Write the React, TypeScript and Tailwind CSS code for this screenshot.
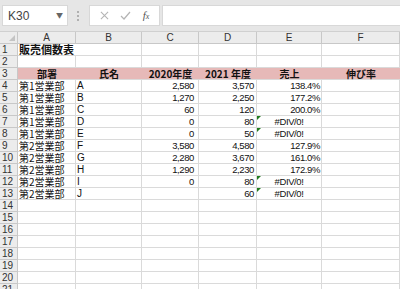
import React from "react";

type Row = { a?: string; b?: string; c?: string; d?: string; e?: string; err?: boolean };

const data: Row[] = [
  { a: "第1営業部", b: "A", c: "2,580", d: "3,570", e: "138.4%" },
  { a: "第1営業部", b: "B", c: "1,270", d: "2,250", e: "177.2%" },
  { a: "第1営業部", b: "C", c: "60", d: "120", e: "200.0%" },
  { a: "第1営業部", b: "D", c: "0", d: "80", e: "#DIV/0!", err: true },
  { a: "第1営業部", b: "E", c: "0", d: "50", e: "#DIV/0!", err: true },
  { a: "第2営業部", b: "F", c: "3,580", d: "4,580", e: "127.9%" },
  { a: "第2営業部", b: "G", c: "2,280", d: "3,670", e: "161.0%" },
  { a: "第2営業部", b: "H", c: "1,290", d: "2,230", e: "172.9%" },
  { a: "第2営業部", b: "I", c: "0", d: "80", e: "#DIV/0!", err: true },
  { a: "第2営業部", b: "J", c: "", d: "60", e: "#DIV/0!", err: true },
];

const LS = { fontFamily: '"Liberation Sans", Arial, sans-serif' };
const cell = "h-[12px] border-r border-b border-[#dadada] overflow-visible whitespace-nowrap leading-[11px] text-[10px] text-[#111]";
const num = "h-[12px] border-r border-b border-[#dadada] whitespace-nowrap leading-[11px] text-[9.5px] tracking-[-0.4px] text-[#111]";
const rh = "h-[12px] border-r border-b border-[#c8c8c8] bg-[#ececec] text-[10px] leading-[11px] pl-[2px] text-[#333]";

export default function App() {
  const rows: React.ReactNode[] = [];
  rows.push(
    <React.Fragment key="r1">
      <div className={rh} style={LS}>1</div>
      <div className={`${cell} pl-[1px] font-bold text-[11px] relative z-10 border-r-0`}>販売個数表</div>
      <div className={cell}></div>
      <div className={cell}></div>
      <div className={cell}></div>
      <div className={cell}></div>
      <div className={cell}></div>
    </React.Fragment>
  );
  rows.push(
    <React.Fragment key="r2">
      <div className={rh} style={LS}>2</div>
      {[0, 1, 2, 3, 4, 5].map((i) => (
        <div key={i} className={cell}></div>
      ))}
    </React.Fragment>
  );
  const hdrs = ["部署", "氏名", "2020年度", "2021 年度", "売上", "伸び率"];
  rows.push(
    <React.Fragment key="r3">
      <div className={rh} style={LS}>3</div>
      {hdrs.map((h, i) => (
        <div key={i} className="h-[12px] border-b border-[#dadada] bg-[#e6b9b8] text-center font-bold text-[10px] leading-[11px] text-[#111] whitespace-nowrap">
          {h}
        </div>
      ))}
    </React.Fragment>
  );
  data.forEach((r, idx) => {
    rows.push(
      <React.Fragment key={"d" + idx}>
        <div className={rh} style={LS}>{idx + 4}</div>
        <div className={`${cell} pl-[1px]`}>{r.a}</div>
        <div className={`${cell} pl-[1px]`} style={LS}>{r.b}</div>
        <div className={`${num} text-right pr-[4px]`} style={LS}>{r.c}</div>
        <div className={`${num} text-right pr-[2px]`} style={LS}>{r.d}</div>
        <div className={`${num} relative ${r.err ? "text-center" : "text-right pr-[1px]"}`} style={LS}>
          {r.err && (
            <span className="absolute left-0 top-0 w-0 h-0 border-t-[4px] border-r-[4px] border-t-[#1e7b1e] border-r-transparent"></span>
          )}
          {r.e}
        </div>
        <div className={cell}></div>
      </React.Fragment>
    );
  });
  for (let n = 14; n <= 21; n++) {
    rows.push(
      <React.Fragment key={"e" + n}>
        <div className={rh} style={LS}>{n}</div>
        {[0, 1, 2, 3, 4, 5].map((i) => (
          <div key={i} className={cell}></div>
        ))}
      </React.Fragment>
    );
  }

  return (
    <div className="w-[400px] h-[289px] overflow-hidden bg-white" style={{ fontFamily: '"Noto Sans CJK JP", "Liberation Sans", sans-serif' }}>
      <div className="h-[32px] bg-[#e6e6e6] flex items-center border-b border-[#d0d0d0]">
        <div className="ml-[2px] w-[66px] h-[21px] bg-white border border-[#d8d8d8] flex items-center pl-[5px] pr-[4px] text-[12px] text-[#444]">
          <span className="flex-1" style={LS}>K30</span>
          <span className="text-[7px] text-[#666]">▼</span>
        </div>
        <div className="w-[20px] flex flex-col items-center gap-[2px]">
          <span className="w-[2px] h-[2px] bg-[#b0b0b0]"></span>
          <span className="w-[2px] h-[2px] bg-[#b0b0b0]"></span>
          <span className="w-[2px] h-[2px] bg-[#b0b0b0]"></span>
        </div>
        <div className="ml-[1px] w-[71px] h-[21px] bg-white border border-[#d8d8d8] flex items-center justify-around px-[4px]">
          <svg width="9" height="9" viewBox="0 0 10 10">
            <path d="M1 1 L9 9 M9 1 L1 9" stroke="#b4b4b4" strokeWidth="1.2" fill="none" />
          </svg>
          <svg width="11" height="9" viewBox="0 0 11 9">
            <path d="M1 5 L4 8 L10 1" stroke="#b4b4b4" strokeWidth="1.2" fill="none" />
          </svg>
          <span className="text-[11px] italic text-[#555]" style={{ fontFamily: '"Liberation Serif", serif' }}>
            f<span className="text-[8px]">x</span>
          </span>
        </div>
        <div className="ml-[2px] flex-1 h-[21px] bg-white border-y border-l border-[#d8d8d8]"></div>
      </div>
      <div className="grid grid-cols-[18px_58px_66px_57px_58px_65px_78px]">
        <div className="h-[12px] border-r border-b border-[#c8c8c8] bg-[#ececec] relative">
          <span className="absolute right-[2px] bottom-[2px] w-0 h-0 border-b-[6px] border-l-[6px] border-b-[#c4c4c4] border-l-transparent"></span>
        </div>
        {["A", "B", "C", "D", "E", "F"].map((c) => (
          <div key={c} className="h-[12px] border-r border-b border-[#c8c8c8] bg-[#ececec] text-center text-[10px] leading-[12px] text-[#333]" style={LS}>
            {c}
          </div>
        ))}
        {rows}
      </div>
    </div>
  );
}
